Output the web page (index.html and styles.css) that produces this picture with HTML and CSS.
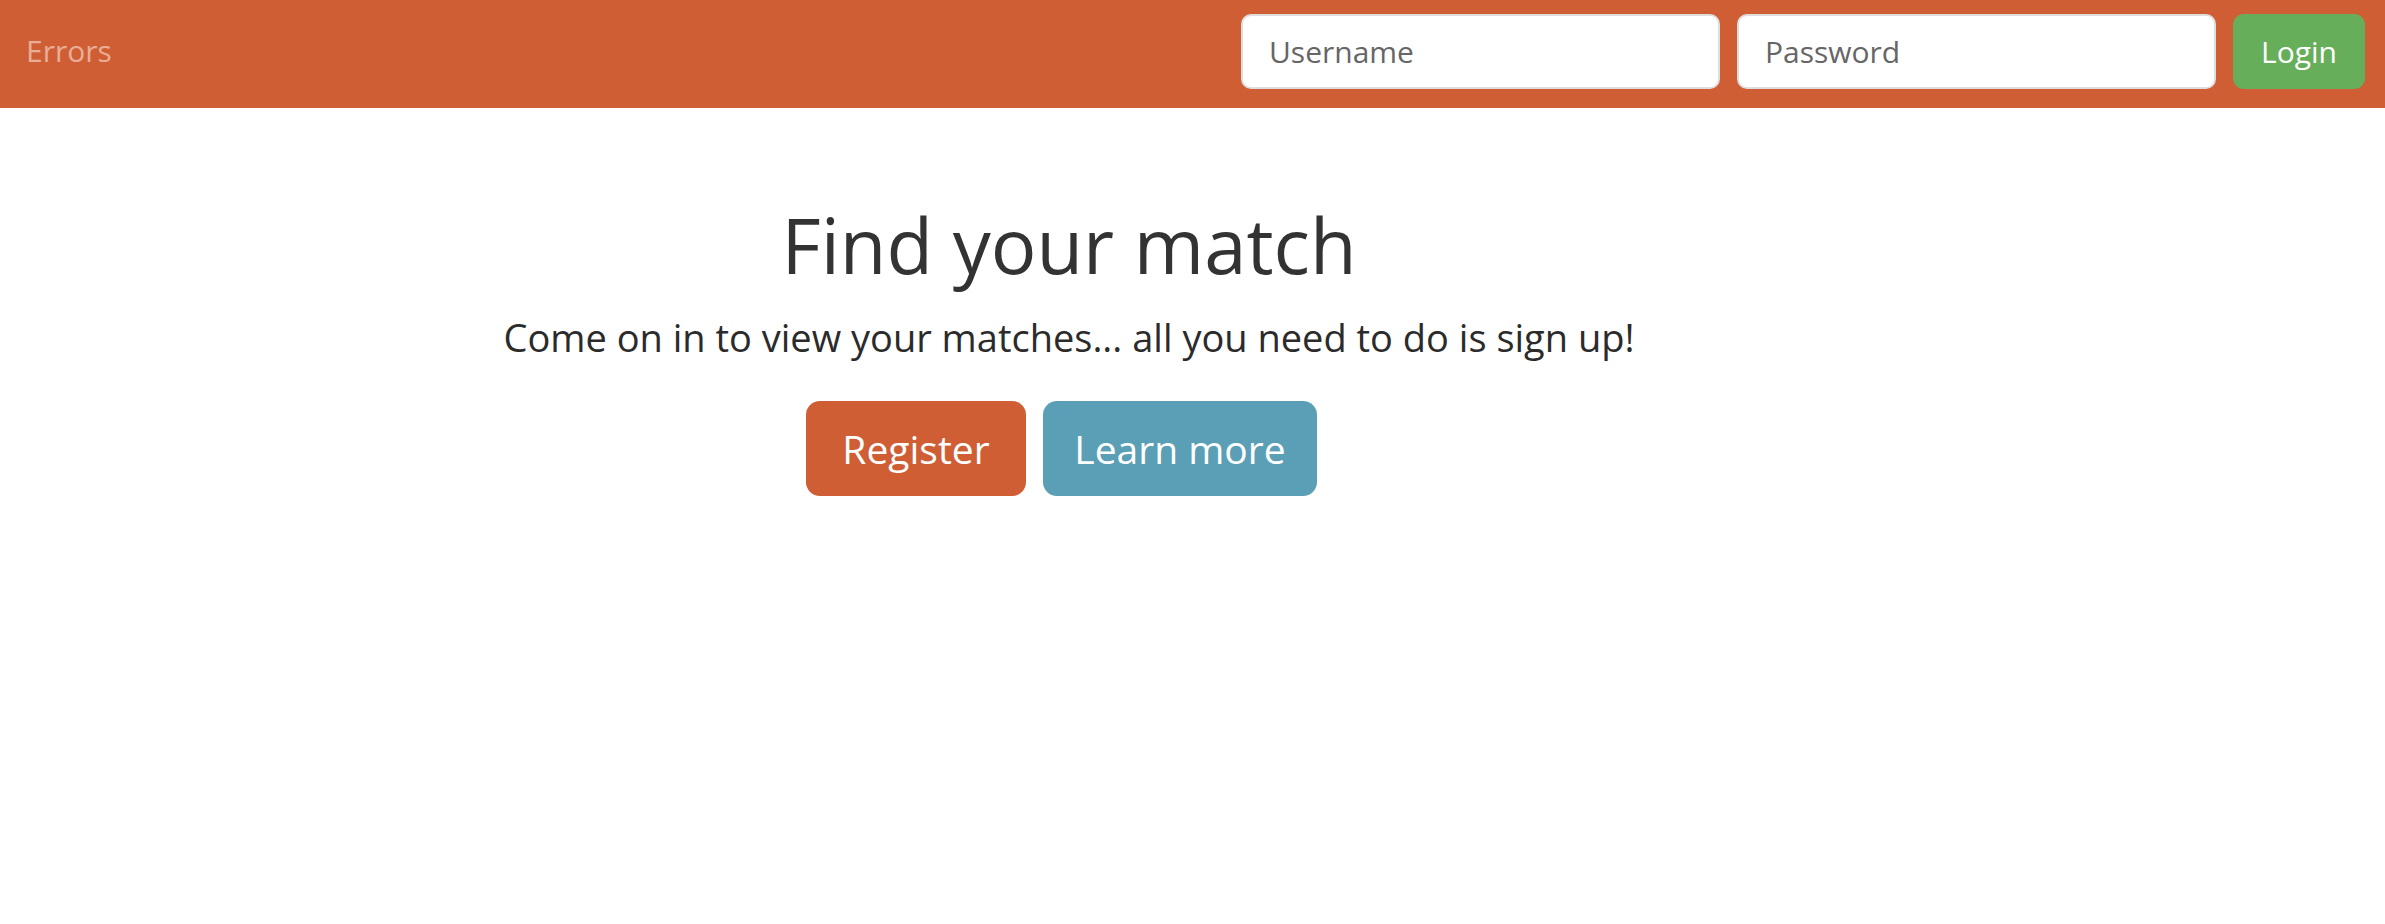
FILE: index.html
```html
<!DOCTYPE html>
<html lang="en">
<head>
<meta charset="utf-8">
<title>Find your match</title>
<link rel="stylesheet" href="styles.css">
</head>
<body>
<nav class="navbar">
  <a class="brand" href="#">Errors</a>
  <form class="login-form">
    <input class="field" type="text" placeholder="Username">
    <input class="field" type="password" placeholder="Password">
    <button class="btn-login" type="button">Login</button>
  </form>
</nav>
<main class="hero">
  <h1 class="title">Find your match</h1>
  <p class="lead">Come on in to view your matches... all you need to do is sign up!</p>
  <div class="actions">
    <a class="btn btn-register" href="#">Register</a>
    <a class="btn btn-info" href="#">Learn more</a>
  </div>
</main>
</body>
</html>
```

FILE: styles.css
```css
* { box-sizing: border-box; }
html, body { margin: 0; padding: 0; background: #ffffff; }
body { font-family: "Open Sans", "Noto Sans", sans-serif; color: #333333; }

.navbar {
  display: flex;
  justify-content: space-between;
  align-items: flex-start;
  height: 108px;
  background: #cf5e34;
  padding: 0 20px 0 26px;
}
.brand {
  font-size: 30px;
  line-height: 30px;
  padding-top: 36px;
  color: #e8ad96;
  text-decoration: none;
}
.login-form {
  display: flex;
  gap: 17px;
  padding-top: 14px;
  margin: 0;
}
.field {
  width: 479px;
  height: 75px;
  border: 2px solid #dedede;
  border-radius: 10px;
  padding: 0 26px;
  font-family: inherit;
  font-size: 30px;
  color: #555;
  background: #fff;
  outline: none;
}
.field::placeholder { color: #666666; }
.btn-login {
  width: 132px;
  height: 75px;
  border: none;
  border-radius: 11px;
  background: #67ae5b;
  color: #ffffff;
  font-family: inherit;
  font-size: 30px;
  padding: 0;
}

.hero {
  width: 2138px;
  text-align: center;
  padding-top: 95px;
}
.title {
  margin: 0;
  font-size: 76px;
  line-height: 1.1;
  font-weight: 400;
  color: #333333;
}
.lead {
  margin: 26px 0 0;
  font-size: 38px;
  line-height: 49px;
  color: #2b2b2b;
}
.actions {
  display: flex;
  justify-content: center;
  gap: 17px;
  margin-top: 39px;
  padding-right: 15px;
}
.btn {
  display: flex;
  align-items: center;
  justify-content: center;
  height: 95px;
  border-radius: 14px;
  font-size: 39px;
  color: #ffffff;
  text-decoration: none;
}
.btn-register { width: 220px; background: #cf5e34; }
.btn-info { width: 274px; background: #5a9fb5; }
```
